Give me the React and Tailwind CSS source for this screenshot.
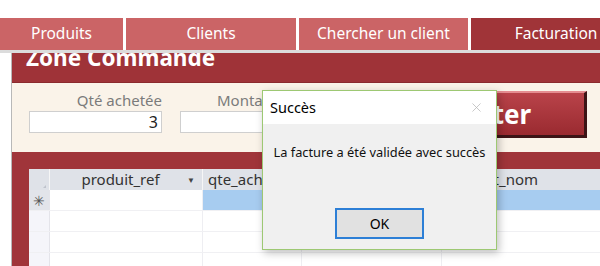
import { X } from 'lucide-react'

const tabs = [
  { label: 'Produits', w: 'w-[123px]', active: false },
  { label: 'Clients', w: 'w-[170px]', active: false },
  { label: 'Chercher un client', w: 'w-[169px]', active: false },
  { label: 'Facturation', w: 'w-[170px]', active: true },
]

function Tabs() {
  return (
    <div className="flex gap-[3px] h-[32px] overflow-hidden">
      {tabs.map((t) => (
        <div
          key={t.label}
          className={`${t.w} shrink-0 flex items-center justify-center text-white text-[15.5px] ${
            t.active ? 'bg-[#a03438]' : 'bg-[#cb6466]'
          }`}
        >
          {t.label}
        </div>
      ))}
    </div>
  )
}

function Grid() {
  const rows = [0, 1, 2, 3]
  return (
    <div className="bg-white flex-1 w-[620px]">
      {/* header */}
      <div className="flex h-[21px] bg-[#dfe2e8] text-[#333] text-[15px] leading-[21px]">
        <div className="w-[21px] border-r border-[#f6f6f6] relative">
          <div className="absolute right-[3px] bottom-[2px] w-0 h-0 border-l-[3px] border-l-transparent border-b-[3px] border-b-[#bfc3cc]" />
        </div>
        <div className="w-[153px] border-r border-[#f6f6f6] flex items-center">
          <span className="flex-1 text-center pl-[4px]">produit_ref</span>
          <span className="text-[8px] text-[#444] pr-[7px]">▼</span>
        </div>
        <div className="w-[99px] border-r border-[#f6f6f6] pl-[5px]">qte_achetee</div>
        <div className="w-[140px] border-r border-[#f6f6f6] pl-[5px]">facture_num</div>
        <div className="flex-1 pl-[5px]">produit_nom</div>
      </div>
      {rows.map((r) => (
        <div key={r} className="flex h-[21px] border-b border-[#f0f0f3]">
          <div
            className={`w-[21px] border-r border-[#e4e4ea] flex items-center justify-center text-[14px] text-[#555] ${
              r === 0 ? 'bg-[#e2e4ea]' : 'bg-[#f5f5fa]'
            }`}
          >
            {r === 0 ? '✳' : ''}
          </div>
          <div className="w-[153px] border-r border-[#eeeef2] bg-white" />
          <div className={`w-[99px] border-r border-[#eeeef2] ${r === 0 ? 'bg-[#a7ccf0]' : 'bg-white'}`} />
          <div className={`w-[140px] border-r border-[#eeeef2] ${r === 0 ? 'bg-[#a7ccf0]' : 'bg-white'}`} />
          <div className={`flex-1 ${r === 0 ? 'bg-[#a7ccf0]' : 'bg-white'}`} />
        </div>
      ))}
    </div>
  )
}

function Dialog() {
  return (
    <div className="absolute left-[262px] top-[90px] w-[235px] h-[160px] border border-[#9dc873] bg-[#f0f0f0] shadow-[2px_3px_8px_rgba(0,0,0,0.25)] flex flex-col">
      <div className="h-[33px] bg-white flex items-center justify-between pl-[7px] pr-[12px]">
        <span className="text-[14.5px] text-black">Succès</span>
        <X size={15} strokeWidth={1.2} className="text-[#b5b5b5]" />
      </div>
      <div className="flex-1 flex flex-col items-center">
        <p className="mt-[19px] text-[12.8px] text-[#111]">La facture a été validée avec succès</p>
        <button className="mt-[46px] w-[89px] h-[31px] border-2 border-[#2d7fd6] bg-[#e1e1e1] text-[14px] text-black">
          OK
        </button>
      </div>
    </div>
  )
}

export default function App() {
  return (
    <div className="relative w-[600px] h-[266px] overflow-hidden bg-white font-['Noto_Sans',sans-serif]">
      <div className="h-[18px]" />
      <Tabs />
      <div className="h-[3px] bg-[#dcdcdc]" />
      <div className="flex h-[213px]">
        <div className="w-[12px] shrink-0 bg-white border-r border-[#b8b8b8]" />
        <div className="flex-1 flex flex-col overflow-hidden">
          {/* title band */}
          <div className="h-[30px] shrink-0 bg-[#9f3338] border-b border-[#8a2a2e] overflow-hidden pl-[14px]">
            <div className="text-white font-bold text-[22.5px] leading-[24px] -mt-[7px] whitespace-nowrap">
              Zone Commande
            </div>
          </div>
          {/* form */}
          <div className="h-[69px] shrink-0 bg-[#faf3e9] flex pl-[17px]">
            <div className="flex flex-col items-end mt-[8px]">
              <span className="text-[15px] text-[#7b7b7b] leading-[18px]">Qté achetée</span>
              <div className="mt-[2px] w-[133px] h-[22px] bg-white border border-[#cfcfcf] text-right pr-[3px] text-[16px] leading-[20px] text-[#222]">
                3
              </div>
            </div>
            <div className="flex flex-col items-start ml-[18px] mt-[8px]">
              <span className="text-[15px] text-[#7b7b7b] leading-[18px] pl-[37px]">Montant</span>
              <div className="mt-[2px] w-[150px] h-[22px] bg-white border border-[#cfcfcf]" />
            </div>
            <div className="ml-[57px] mt-[8px] w-[200px] h-[47px] border-t-2 border-l-2 border-t-[#e58d91] border-l-[#d06a70] border-r-[3px] border-b-[3px] border-r-[#3c1416] border-b-[#3c1416] bg-gradient-to-b from-[#b9434a] to-[#9a2a30] flex items-center justify-center text-white font-bold text-[26px] pr-[8px]">
              Ajouter
            </div>
          </div>
          {/* grid band */}
          <div className="flex-1 bg-[#a0353a] pt-[17px] pl-[17px] flex">
            <Grid />
          </div>
        </div>
      </div>
      <Dialog />
    </div>
  )
}
